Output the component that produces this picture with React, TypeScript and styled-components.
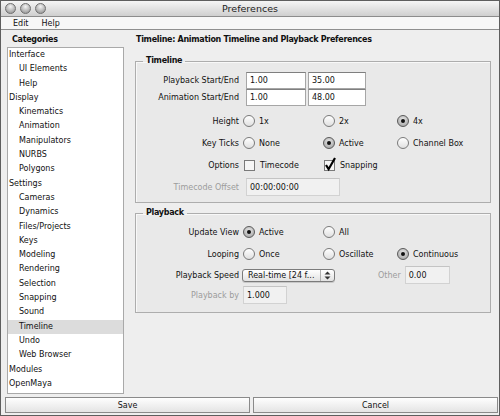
import React from 'react';
import styled, { createGlobalStyle, css } from 'styled-components';

const GlobalStyle = createGlobalStyle`
  html, body { margin: 0; padding: 0; background: #fff; }
  body {
    font-family: "DejaVu Sans", Verdana, sans-serif;
    font-size: 8px;
    color: #111;
  }
  * { box-sizing: border-box; }
`;

const Window = styled.div`
  width: 500px;
  height: 416px;
  border: 1px solid #5e5e5e;
  display: flex;
  flex-direction: column;
  background: #eeeeee;
  overflow: hidden;
`;

const TitleBar = styled.div`
  height: 16px;
  flex: none;
  display: grid;
  grid-template-columns: 60px 1fr 60px;
  align-items: center;
  background: linear-gradient(#f5f5f5, #cfcfcf);
  border-bottom: 1px solid #8c8c8c;
`;

const Lights = styled.div`
  display: flex;
  gap: 4px;
  padding-left: 4px;
`;

const Light = styled.span`
  width: 11px;
  height: 11px;
  border-radius: 50%;
  border: 1px solid #707070;
  background: radial-gradient(circle at 50% 30%, #f4f4f4 0, #b8b8b8 55%, #8a8a8a 100%);
`;

const Title = styled.div`
  text-align: center;
  font-size: 9.5px;
  color: #222;
`;

const MenuBar = styled.div`
  height: 13px;
  flex: none;
  display: flex;
  align-items: center;
  gap: 13px;
  padding-left: 12px;
  background: #f7f7f7;
  border-bottom: 1px solid #8f8f8f;
`;

const Body = styled.div`
  flex: 1;
  display: flex;
  min-height: 0;
`;

const LeftPane = styled.div`
  width: 127px;
  flex: none;
  display: flex;
  flex-direction: column;
  padding: 0 4px 2px 6px;
`;

const Heading = styled.div`
  font-weight: bold;
  letter-spacing: -0.3px;
  line-height: 10px;
  padding: 5px 0 2px 5px;
  height: 17px;
  flex: none;
`;

const List = styled.div`
  flex: 1;
  background: #fff;
  border: 1px solid #a9a9a9;
  display: flex;
  flex-direction: column;
`;

const ListItem = styled.div<{ $sub?: boolean; $selected?: boolean }>`
  height: 14.3px;
  line-height: 14.3px;
  padding-left: ${p => (p.$sub ? '11px' : '1px')};
  background: ${p => (p.$selected ? '#dcdcdc' : 'transparent')};
  white-space: nowrap;
`;

const RightPane = styled.div`
  flex: 1;
  padding: 0 8px 0 7px;
  display: flex;
  flex-direction: column;
`;

const PaneTitle = styled.div`
  font-weight: bold;
  letter-spacing: -0.3px;
  line-height: 10px;
  margin: 5px 0 0 1px;
`;

const Group = styled.fieldset<{ $top: number; $pb: number }>`
  margin: ${p => p.$top}px 0 0 0;
  padding: 0 0 ${p => p.$pb}px 0;
  border: 1px solid #adadad;
  box-shadow: inset 1px 1px 0 #f8f8f8;
  background: #e9e9e9;
  min-width: 0;
`;

const Legend = styled.legend`
  font-weight: bold;
  letter-spacing: -0.3px;
  line-height: 12px;
  padding: 0 3px;
  margin-left: 7px;
`;

const Row = styled.div<{ $h: number; $mt?: number }>`
  display: grid;
  grid-template-columns: 107px 80px 74px 1fr;
  align-items: center;
  height: ${p => p.$h}px;
  margin-top: ${p => p.$mt ?? 0}px;
`;

const Label = styled.div<{ $dim?: boolean }>`
  text-align: right;
  padding-right: 4px;
  color: ${p => (p.$dim ? '#9c9c9c' : '#111')};
  white-space: nowrap;
`;

const Span = styled.div`
  grid-column: 2 / 5;
  display: flex;
  align-items: center;
`;

const Field = styled.div<{ $w: number; $h?: number; $dim?: boolean; $ml?: number }>`
  width: ${p => p.$w}px;
  height: ${p => p.$h ?? 17}px;
  margin-left: ${p => p.$ml ?? 0}px;
  padding-left: 3px;
  display: flex;
  align-items: center;
  background: ${p => (p.$dim ? '#f1f1f1' : '#fff')};
  border: 1px solid ${p => (p.$dim ? '#d2d2d2' : '#a6a6a6')};
  border-top-color: ${p => (p.$dim ? '#c4c4c4' : '#7f7f7f')};
`;

const Option = styled.div`
  display: flex;
  align-items: center;
  gap: 4px;
  white-space: nowrap;
`;

const RadioDot = styled.span<{ $on?: boolean }>`
  width: 12px;
  height: 12px;
  flex: none;
  border-radius: 50%;
  position: relative;
  border: 1px solid ${p => (p.$on ? '#5a5a5a' : '#7a7a7a')};
  background: ${p =>
    p.$on
      ? 'radial-gradient(circle at 50% 35%, #e6e6e6, #9c9c9c)'
      : 'linear-gradient(#ffffff, #e0e0e0)'};
  ${p =>
    p.$on &&
    css`
      &::after {
        content: '';
        position: absolute;
        left: 3px;
        top: 3px;
        width: 4px;
        height: 4px;
        border-radius: 50%;
        background: #111;
      }
    `}
`;

const Select = styled.div`
  width: 93px;
  height: 13px;
  margin-left: -1px;
  border: 1px solid #7b7b7b;
  border-radius: 3px;
  background: linear-gradient(#ffffff, #e2e2e2);
  display: flex;
  align-items: center;
  box-shadow: 0 1px 0 #c8c8c8;
`;

const SelectText = styled.span`
  flex: 1;
  padding-left: 5px;
  white-space: nowrap;
  overflow: hidden;
`;

const Stepper = styled.span`
  width: 14px;
  height: 100%;
  border-left: 1px solid #b0b0b0;
  display: flex;
  align-items: center;
  justify-content: center;
`;

const OtherLabel = styled.span`
  color: #9c9c9c;
  margin-left: 43px;
`;

const ButtonRow = styled.div`
  height: 19px;
  flex: none;
  display: grid;
  grid-template-columns: 1fr 1fr;
  gap: 3px;
  padding: 1px 1px 2px 4px;
`;

const Button = styled.div`
  height: 16px;
  display: flex;
  align-items: center;
  justify-content: center;
  border: 1px solid #8a8a8a;
  background: linear-gradient(#fefefe, #e4e4e4);
`;

function Radio({ on, label }: { on?: boolean; label: string }) {
  return (
    <Option>
      <RadioDot $on={on} />
      <span>{label}</span>
    </Option>
  );
}

function Check({ on, label }: { on?: boolean; label: string }) {
  return (
    <Option>
      <svg width="13" height="13" viewBox="0 0 13 13" style={{ overflow: 'visible' }}>
        <rect x="1.5" y="1.5" width="10" height="10" fill="#f6f6f6" stroke="#7a7a7a" />
        {on && <path d="M3 6 L5.6 10.2 L12 -1" stroke="#000" strokeWidth="2.2" fill="none" />}
      </svg>
      <span>{label}</span>
    </Option>
  );
}

const categories: [string, boolean][] = [
  ['Interface', false],
  ['UI Elements', true],
  ['Help', true],
  ['Display', false],
  ['Kinematics', true],
  ['Animation', true],
  ['Manipulators', true],
  ['NURBS', true],
  ['Polygons', true],
  ['Settings', false],
  ['Cameras', true],
  ['Dynamics', true],
  ['Files/Projects', true],
  ['Keys', true],
  ['Modeling', true],
  ['Rendering', true],
  ['Selection', true],
  ['Snapping', true],
  ['Sound', true],
  ['Timeline', true],
  ['Undo', true],
  ['Web Browser', true],
  ['Modules', false],
  ['OpenMaya', false],
];

export default function App() {
  return (
    <>
      <GlobalStyle />
      <Window>
        <TitleBar>
          <Lights>
            <Light />
            <Light />
            <Light />
          </Lights>
          <Title>Preferences</Title>
          <span />
        </TitleBar>
        <MenuBar>
          <span>Edit</span>
          <span>Help</span>
        </MenuBar>

        <Body>
          <LeftPane>
            <Heading>Categories</Heading>
            <List>
              {categories.map(([name, sub]) => (
                <ListItem key={name} $sub={sub} $selected={name === 'Timeline'}>
                  {name}
                </ListItem>
              ))}
            </List>
          </LeftPane>

          <RightPane>
            <PaneTitle>Timeline: Animation Timeline and Playback Preferences</PaneTitle>

            <Group $top={10} $pb={4}>
              <Legend>Timeline</Legend>
              <Row $h={17} $mt={5}>
                <Label>Playback Start/End</Label>
                <Span>
                  <Field $w={60} $ml={3}>1.00</Field>
                  <Field $w={58} $ml={2}>35.00</Field>
                </Span>
              </Row>
              <Row $h={17}>
                <Label>Animation Start/End</Label>
                <Span>
                  <Field $w={60} $ml={3}>1.00</Field>
                  <Field $w={58} $ml={2}>48.00</Field>
                </Span>
              </Row>
              <Row $h={22} $mt={4}>
                <Label>Height</Label>
                <Radio label="1x" />
                <Radio label="2x" />
                <Radio on label="4x" />
              </Row>
              <Row $h={22}>
                <Label>Key Ticks</Label>
                <Radio label="None" />
                <Radio on label="Active" />
                <Radio label="Channel Box" />
              </Row>
              <Row $h={22}>
                <Label>Options</Label>
                <Check label="Timecode" />
                <Check on label="Snapping" />
              </Row>
              <Row $h={22}>
                <Label $dim>Timecode Offset</Label>
                <Span>
                  <Field $w={94} $h={18} $ml={3} $dim>00:00:00:00</Field>
                </Span>
              </Row>
            </Group>

            <Group $top={4} $pb={7}>
              <Legend>Playback</Legend>
              <Row $h={22} $mt={2}>
                <Label>Update View</Label>
                <Radio on label="Active" />
                <Radio label="All" />
              </Row>
              <Row $h={22}>
                <Label>Looping</Label>
                <Radio label="Once" />
                <Radio label="Oscillate" />
                <Radio on label="Continuous" />
              </Row>
              <Row $h={20}>
                <Label>Playback Speed</Label>
                <Span>
                  <Select>
                    <SelectText>Real-time [24 f...</SelectText>
                    <Stepper>
                      <svg width="7" height="9" viewBox="0 0 7 9">
                        <path d="M3.5 0.5 L6.5 3.5 H0.5 Z M3.5 8.5 L6.5 5.5 H0.5 Z" fill="#333" />
                      </svg>
                    </Stepper>
                  </Select>
                  <OtherLabel>Other</OtherLabel>
                  <Field $w={45} $h={18} $ml={4} $dim>0.00</Field>
                </Span>
              </Row>
              <Row $h={20}>
                <Label $dim>Playback by</Label>
                <Span>
                  <Field $w={44} $h={18} $dim>1.000</Field>
                </Span>
              </Row>
            </Group>
          </RightPane>
        </Body>

        <ButtonRow>
          <Button>Save</Button>
          <Button>Cancel</Button>
        </ButtonRow>
      </Window>
    </>
  );
}
